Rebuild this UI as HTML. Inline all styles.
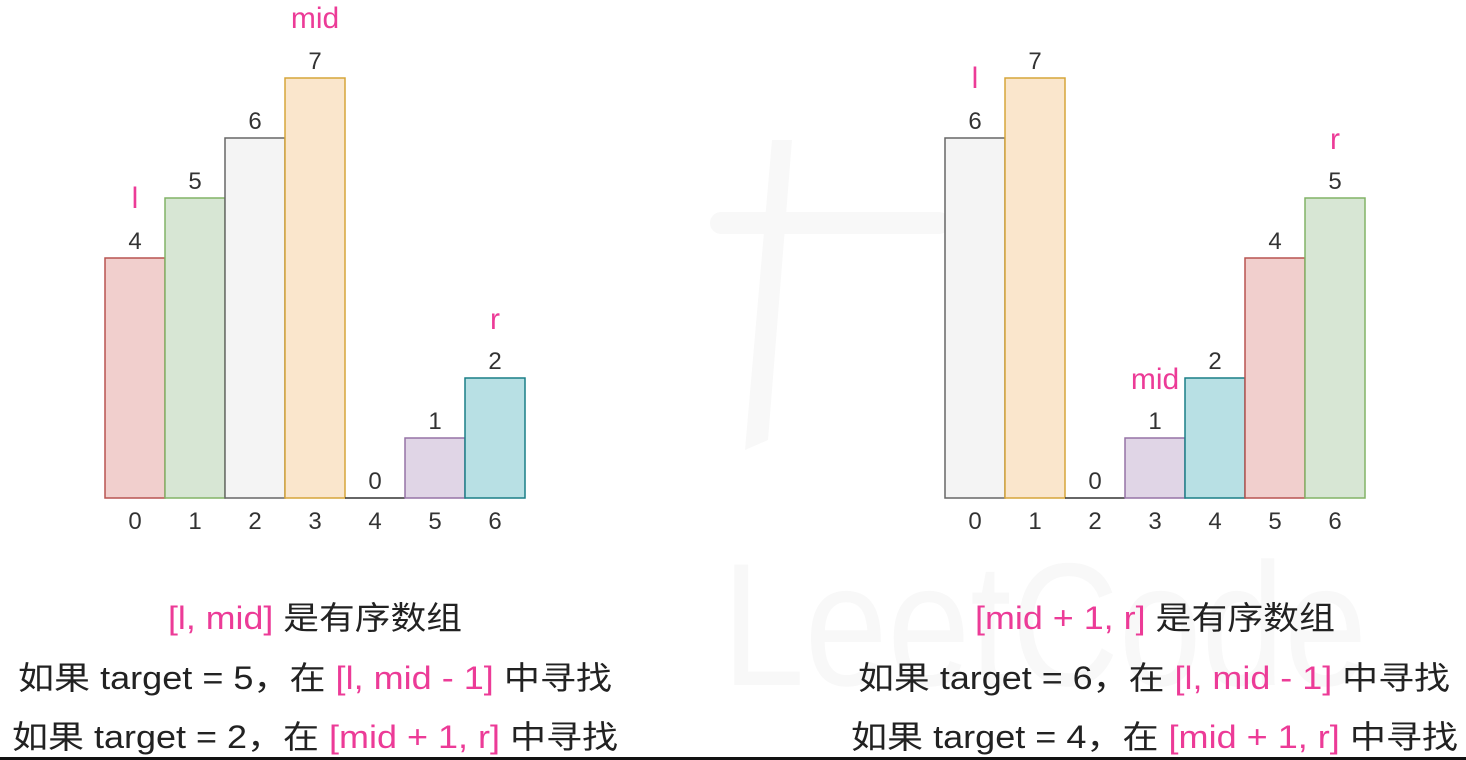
<!DOCTYPE html>
<html><head><meta charset="utf-8"><style>
html,body{margin:0;padding:0;background:#fff;width:1466px;height:760px;overflow:hidden}
svg{display:block}
text{font-family:"Liberation Sans","Noto Sans CJK SC",sans-serif}
</style></head><body>
<svg width="1466" height="760" viewBox="0 0 1466 760">
<g fill="#f8f8f8">
<text x="722" y="685" font-size="175" textLength="645" lengthAdjust="spacingAndGlyphs">LeetCode</text>
<rect x="710" y="212" width="240" height="22" rx="11"/>
<path d="M772 140 L792 140 L768 440 L745 450Z"/>
<rect x="990" y="140" width="20" height="280" rx="10"/>
</g>
<g stroke-width="1.5">
<rect x="105" y="258" width="60" height="240" fill="#f1cfcd" stroke="#b85450"/>
<rect x="165" y="198" width="60" height="300" fill="#d7e6d4" stroke="#82b366"/>
<rect x="225" y="138" width="60" height="360" fill="#f4f4f4" stroke="#666"/>
<rect x="285" y="78" width="60" height="420" fill="#fae6cc" stroke="#d6a53a"/>
<line x1="345" y1="498" x2="405" y2="498" stroke="#333"/>
<rect x="405" y="438" width="60" height="60" fill="#e0d5e6" stroke="#9673a6"/>
<rect x="465" y="378" width="60" height="120" fill="#b8e0e4" stroke="#1a7f87"/>
<rect x="945" y="138" width="60" height="360" fill="#f4f4f4" stroke="#666"/>
<rect x="1005" y="78" width="60" height="420" fill="#fae6cc" stroke="#d6a53a"/>
<line x1="1065" y1="498" x2="1125" y2="498" stroke="#333"/>
<rect x="1125" y="438" width="60" height="60" fill="#e0d5e6" stroke="#9673a6"/>
<rect x="1185" y="378" width="60" height="120" fill="#b8e0e4" stroke="#1a7f87"/>
<rect x="1245" y="258" width="60" height="240" fill="#f1cfcd" stroke="#b85450"/>
<rect x="1305" y="198" width="60" height="300" fill="#d7e6d4" stroke="#82b366"/>
</g>
<g font-size="24" fill="#333" text-anchor="middle">
<text x="135" y="249">4</text><text x="195" y="189">5</text><text x="255" y="129">6</text><text x="315" y="69">7</text>
<text x="375" y="489">0</text><text x="435" y="429">1</text><text x="495" y="369">2</text>
<text x="975" y="129">6</text><text x="1035" y="69">7</text><text x="1095" y="489">0</text><text x="1155" y="429">1</text>
<text x="1215" y="369">2</text><text x="1275" y="249">4</text><text x="1335" y="189">5</text>
<text x="135" y="529">0</text><text x="195" y="529">1</text><text x="255" y="529">2</text><text x="315" y="529">3</text><text x="375" y="529">4</text><text x="435" y="529">5</text><text x="495" y="529">6</text>
<text x="975" y="529">0</text><text x="1035" y="529">1</text><text x="1095" y="529">2</text><text x="1155" y="529">3</text><text x="1215" y="529">4</text><text x="1275" y="529">5</text><text x="1335" y="529">6</text>
</g>
<g font-size="30" fill="#ec3b97" text-anchor="middle">
<text x="135" y="208">l</text><text x="315" y="28">mid</text><text x="495" y="329">r</text>
<text x="975" y="88">l</text><text x="1155" y="389">mid</text><text x="1335" y="149">r</text>
</g>
<g font-size="32" fill="#222" lengthAdjust="spacingAndGlyphs">
<text x="168" y="629" textLength="294" lengthAdjust="spacingAndGlyphs"><tspan fill="#ec3b97">[l, mid]</tspan> 是有序数组</text>
<text x="18" y="689" textLength="594" lengthAdjust="spacingAndGlyphs">如果 target = 5，在 <tspan fill="#ec3b97">[l, mid - 1]</tspan> 中寻找</text>
<text x="12" y="748" textLength="606" lengthAdjust="spacingAndGlyphs">如果 target = 2，在 <tspan fill="#ec3b97">[mid + 1, r]</tspan> 中寻找</text>
<text x="975" y="629" textLength="360" lengthAdjust="spacingAndGlyphs"><tspan fill="#ec3b97">[mid + 1, r]</tspan> 是有序数组</text>
<text x="858" y="689" textLength="592" lengthAdjust="spacingAndGlyphs">如果 target = 6，在 <tspan fill="#ec3b97">[l, mid - 1]</tspan> 中寻找</text>
<text x="851" y="748" textLength="607" lengthAdjust="spacingAndGlyphs">如果 target = 4，在 <tspan fill="#ec3b97">[mid + 1, r]</tspan> 中寻找</text>
</g>
<rect x="0" y="757" width="1466" height="3" fill="#111"/>
</svg>
</body></html>
